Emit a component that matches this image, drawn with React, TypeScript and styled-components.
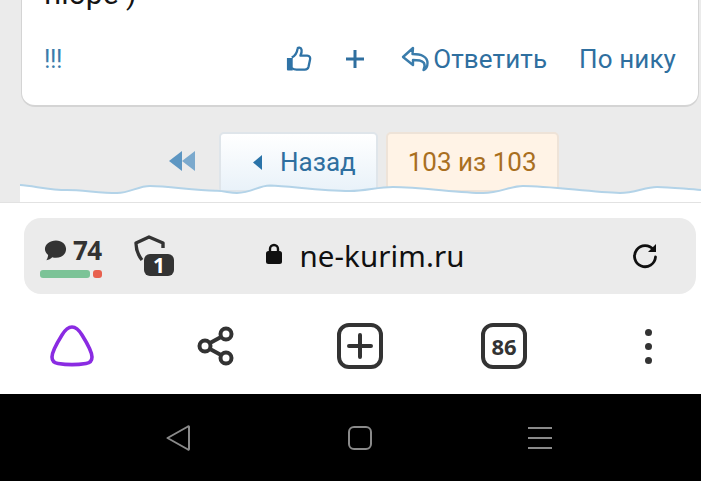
import React from 'react';
import styled, {createGlobalStyle} from 'styled-components';

const Global = createGlobalStyle`
  html, body {
    margin: 0;
    padding: 0;
    background: #000;
  }
  * {
    box-sizing: border-box;
  }
`;
const Screen = styled.div`
  width: 701px;
  height: 481px;
  display: flex;
  flex-direction: column;
  overflow: hidden;
  font-family: Roboto, "Liberation Sans", sans-serif;
`;
const Page = styled.div`
  position: relative;
  height: 203px;
  flex: none;
  background: #ebebeb;
  overflow: hidden;
  border-bottom: 1px solid #e2e2e2;
`;
const Card = styled.div`
  width: 678px;
  height: 127px;
  margin: -20px 0 0 21px;
  padding: 0 22px 0 22px;
  background: #fff;
  border: 2px solid #d4d4d4;
  border-top: none;
  border-left-width: 1px;
  border-right-width: 1px;
  border-radius: 0 0 14px 14px;
  display: flex;
  flex-direction: column;
`;
const PostText = styled.div`
  height: 28px;
  font-size: 30px;
  line-height: 28px;
  color: #141414;
  flex: none;
`;
const Actions = styled.div`
  display: flex;
  align-items: center;
  height: 34px;
  margin-top: 34px;
  color: #2f6f9f;
  font-size: 26px;
`;
const Marks = styled.span`
  font-size: 25px;
  margin-right: auto;
  color: #3a7cab;
  letter-spacing: -0.5px;
`;
const ActionLink = styled.span<{$gap?: number}>`
  display: flex;
  align-items: center;
  gap: 4px;
  margin-left: ${p => p.$gap ?? 0}px;
  letter-spacing: 0.1px;
`;
const Pager = styled.div`
  display: flex;
  align-items: flex-start;
  height: 62px;
  margin: 25px 0 0 168px;
`;
const Skip = styled.span`
  width: 51px;
  height: 58px;
  display: flex;
  align-items: center;
`;
const PageButton = styled.div<{$active?: boolean}>`
  height: 60px;
  display: flex;
  align-items: center;
  gap: 17px;
  font-size: 26px;
  border-radius: 5px 5px 0 0;
  padding: ${p => (p.$active ? '0 20px' : '0 20px 0 32px')};
  margin-left: ${p => (p.$active ? '8px' : '0')};
  color: ${p => (p.$active ? '#a96f1f' : '#2f6f9f')};
  background: ${p => (p.$active ? '#fff3e6' : 'linear-gradient(#ffffff, #e9f2f9)')};
  border: 2px solid ${p => (p.$active ? '#eee3d8' : '#dfe5ea')};
`;
const Wave = styled.svg`
  position: absolute;
  left: 20px;
  top: 180px;
`;
const Browser = styled.div`
  flex: none;
  height: 191px;
  background: #fff;
  padding-top: 15px;
`;
const UrlBar = styled.div`
  position: relative;
  height: 76px;
  margin: 0 5px 0 24px;
  background: #ebebeb;
  border-radius: 17px;
  display: flex;
  align-items: center;
  justify-content: center;
  color: #101010;
`;
const Tabs = styled.div`
  position: absolute;
  left: 16px;
  top: 19px;
  width: 62px;
`;
const Counter = styled.div`
  display: flex;
  align-items: center;
  gap: 6px;
  height: 27px;
  margin-left: 4px;
  font: 700 26px/27px "Open Sans", "Noto Sans", sans-serif;
  color: #333;
  letter-spacing: -0.5px;
`;
const Meter = styled.div`
  display: flex;
  gap: 3px;
  height: 8px;
  margin-top: 6px;
`;
const MeterPart = styled.div<{$color: string; $width: number}>`
  width: ${p => p.$width}px;
  background: ${p => p.$color};
  border-radius: 3px;
`;
const Shield = styled.div`
  position: absolute;
  left: 109px;
  top: 16px;
  width: 46px;
  height: 44px;
`;
const ShieldBadge = styled.span`
  position: absolute;
  left: 11px;
  top: 20px;
  width: 30px;
  height: 22px;
  background: #333;
  color: #fff;
  border-radius: 6px;
  text-align: center;
  font: 700 21px/23px "Open Sans", "Noto Sans", sans-serif;
`;
const Address = styled.div`
  display: flex;
  align-items: center;
  gap: 17px;
  margin: 0 0 0 11px;
  font: 400 29.5px/36px "Noto Sans", "Open Sans", sans-serif;
  letter-spacing: 0.1px;
`;
const LockIcon = styled.svg`
  margin-top: -5px;
`;
const Reload = styled.span`
  position: absolute;
  right: 37px;
  top: 24px;
  display: flex;
`;
const Tools = styled.div`
  height: 100px;
  display: grid;
  grid-template-columns: repeat(4, 144px) 1fr;
  align-items: center;
  justify-items: center;
  padding-top: 4px;
`;
const TabCount = styled.div`
  width: 46px;
  height: 46px;
  border: 4px solid #333;
  border-radius: 12px;
  display: flex;
  align-items: center;
  justify-content: center;
  color: #333;
  font: 700 22px/1 "Open Sans", "Noto Sans", sans-serif;
`;
const Dots = styled.div`
  justify-self: start;
  width: 32px;
  margin-left: 56px;
  display: flex;
  flex-direction: column;
  align-items: center;
  gap: 7px;
`;
const Dot = styled.i`
  width: 7px;
  height: 7px;
  border-radius: 50%;
  background: #333;
`;
const NavBar = styled.div`
  flex: 1;
  background: #000;
  display: flex;
  align-items: center;
  justify-content: space-between;
  padding: 0 149px 0 165px;
`;

const wavePath =
  'M0 5 C14 6 30 10 47 10 C62 10 80 13 97 13 C110 13 118 6 130 6 C150 6 175 11 197 10.700 C205 11 210 13 217 13 C232 13 238 5.500 250 5.500 C270 6 300 11 330 11 C345 11 358 7 373 7 C400 7 440 13 463 13 C480 13 490 6 503 6 C530 6 570 12 600 13 C615 13 625 7 637 7 C650 7 665 9 681 10';

const App: React.FC = () => (
  <Screen>
    <Global/>
    <Page>
      <Card>
        <PostText>пюре )</PostText>
        <Actions>
          <Marks>!!!</Marks>
          <svg width="27" height="28" viewBox="0 0 28 28" fill="none">
            <path d="M2 13h6v13H3a1 1 0 0 1-1-1z" fill="#2f73a6"/>
            <path d="M7 12.500c3-1.500 5.500-5 6-9 .2-2 3.800-1.600 4.200 1 .3 2-.4 4.500-1.200 6h7c2.600 0 3.500 2 3 4l-1.600 7.500c-.5 2-1.800 3-3.800 3H12c-2 0-3.500-.5-5-1.500" stroke="#2f73a6" strokeWidth="2.400" strokeLinejoin="round"/>
          </svg>
          <ActionLink $gap={33}>
            <svg width="20" height="20" viewBox="0 0 20 20">
              <path d="M10 1v18M1 10h18" stroke="#2f6f9f" strokeWidth="3"/>
            </svg>
          </ActionLink>
          <ActionLink $gap={36}>
            <svg width="28" height="26" viewBox="0 0 28 26" fill="none">
              <path d="M12 2 2 11l10 8v-5c5 0 9 0 11 3 1 2 .5 5-.500 7 3-1 4-4 4-7 0-6-6-9-15-9z" stroke="#3a7cab" strokeWidth="2.400" strokeLinejoin="round"/>
            </svg>
            Ответить
          </ActionLink>
          <ActionLink $gap={32}>По нику</ActionLink>
        </Actions>
      </Card>
      <Pager>
        <Skip>
          <svg width="28" height="22" viewBox="0 0 28 22">
            <path d="M14 1 1 11l13 10z" fill="#5d96c2"/>
            <path d="M27 1 14 11l13 10z" fill="#7ba9cd"/>
          </svg>
        </Skip>
        <PageButton>
          <svg width="10" height="15" viewBox="0 0 10 15">
            <path d="M9 0 0 7.500 9 15z" fill="#2a73a8"/>
          </svg>
          Назад
        </PageButton>
        <PageButton $active>103 из 103</PageButton>
      </Pager>
      <Wave width="681" height="23" viewBox="0 0 681 23">
        <path d={`${wavePath} L681 23 L0 23 Z`} fill="#fff"/>
        <path d={wavePath} fill="none" stroke="#b3d3e8" strokeWidth="2"/>
      </Wave>
    </Page>
    <Browser>
      <UrlBar>
        <Tabs>
          <Counter>
            <svg width="23" height="23" viewBox="0 0 25 25">
              <path d="M13 1.500c6.500 0 11 4 11 9.500s-4.500 9.500-11 9.500c-1.500 0-3-.2-4-.6-1.500 1.500-4 3-6.500 3.100 1-1.200 1.800-3 2-5.500-2-1.600-3.500-3.800-3.500-6.500 0-5.500 5.500-9.500 12-9.500z" fill="#333"/>
            </svg>
            74
          </Counter>
          <Meter>
            <MeterPart $color="#7cc397" $width={50}/>
            <MeterPart $color="#e8604e" $width={9}/>
          </Meter>
        </Tabs>
        <Shield>
          <svg width="34" height="30" viewBox="0 0 34 30" fill="none">
            <path d="M9 26C5 21 3 16 3 9L16 3l14 6v5" stroke="#333" strokeWidth="3.400" strokeLinejoin="round"/>
          </svg>
          <ShieldBadge>1</ShieldBadge>
        </Shield>
        <Address>
          <LockIcon width="16" height="22" viewBox="0 0 16 22">
            <path d="M4 9V6a4 4 0 0 1 8 0v3" fill="none" stroke="#101010" strokeWidth="2.400"/>
            <rect x="0" y="8" width="16" height="13" rx="2.500" fill="#101010"/>
          </LockIcon>
          ne-kurim.ru
        </Address>
        <Reload>
          <svg width="28" height="28" viewBox="0 0 28 28" fill="none">
            <path d="M22.500 8A10.500 10.500 0 1 0 24.500 15" stroke="#101010" strokeWidth="2.800" strokeLinecap="round"/>
            <path d="M25 2v8h-8z" fill="#101010"/>
          </svg>
        </Reload>
      </UrlBar>
      <Tools>
        <svg width="46" height="44" viewBox="0 0 46 44" fill="none">
          <path d="M23 3C27 3 30 6 33 11 38 19 43 27 43 33 43 37 40 39 37 39.500 28 41 18 41 9 39.500 6 39 3 37 3 33 3 27 8 19 13 11 16 6 19 3 23 3z" stroke="#8a2be2" strokeWidth="3.600"/>
        </svg>
        <svg width="38" height="42" viewBox="0 0 38 42" fill="none">
          <circle cx="29" cy="9" r="5.500" stroke="#333" strokeWidth="4"/>
          <circle cx="29" cy="33" r="5.500" stroke="#333" strokeWidth="4"/>
          <circle cx="8" cy="21" r="5.500" stroke="#333" strokeWidth="4"/>
          <path d="M13 18 24 12M13 24l11 6" stroke="#333" strokeWidth="4"/>
        </svg>
        <svg width="46" height="46" viewBox="0 0 46 46" fill="none">
          <rect x="2" y="2" width="42" height="42" rx="10" stroke="#333" strokeWidth="4"/>
          <path d="M23 12v22M12 23h22" stroke="#333" strokeWidth="4" strokeLinecap="round"/>
        </svg>
        <TabCount>86</TabCount>
        <Dots>
          <Dot/>
          <Dot/>
          <Dot/>
        </Dots>
      </Tools>
    </Browser>
    <NavBar>
      <svg width="26" height="28" viewBox="0 0 26 28" fill="none">
        <path d="M23 2.500 2.500 14 23 25.500c.6.300 1 0 1-.6V3.100c0-.6-.4-.9-1-.6z" stroke="#8a8a8a" strokeWidth="2" strokeLinejoin="round"/>
      </svg>
      <svg width="24" height="24" viewBox="0 0 24 24" fill="none">
        <rect x="1" y="1" width="22" height="22" rx="5" stroke="#8a8a8a" strokeWidth="2"/>
      </svg>
      <svg width="24" height="24" viewBox="0 0 24 24">
        <path d="M0 2h24M0 12h24M0 22h24" stroke="#8a8a8a" strokeWidth="2"/>
      </svg>
    </NavBar>
  </Screen>
);

export default App;
